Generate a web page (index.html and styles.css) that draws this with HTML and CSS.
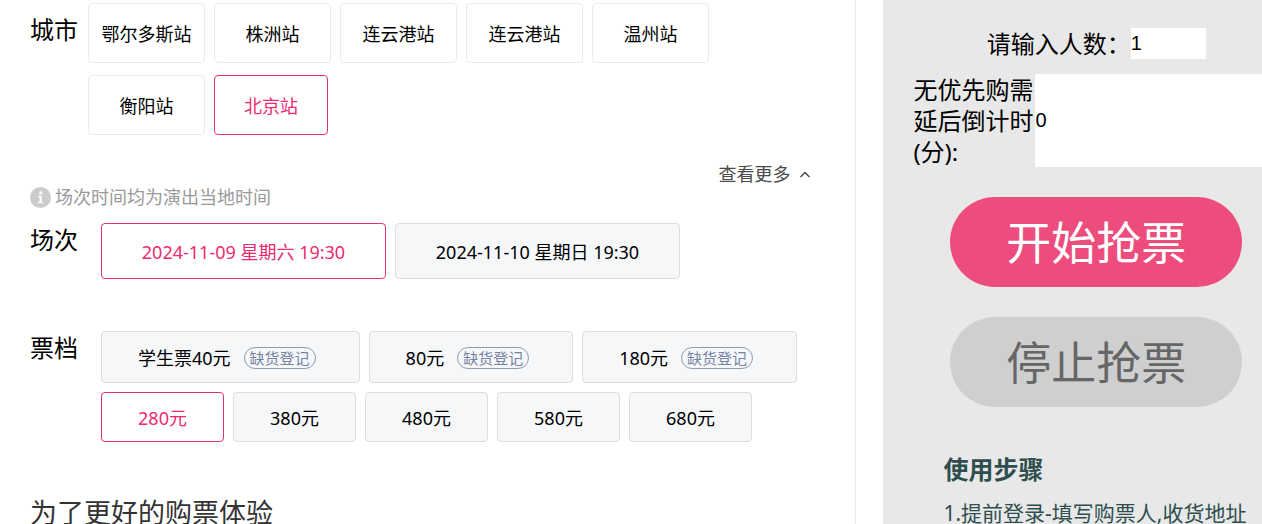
FILE: index.html
```
<!DOCTYPE html>
<html lang="zh-CN">

<head>
  <meta charset="UTF-8" />
  <meta name="viewport" content="width=device-width, initial-scale=1.0" />
  <title>抢票</title>
  <link rel="stylesheet" href="styles.css">
</head>

<body>

  <div class="page">
    <main class="detail">
      <section class="row city">
        <h2 class="label">城市</h2>
        <div class="options">
          <button type="button" class="option">鄂尔多斯站</button>
          <button type="button" class="option">株洲站</button>
          <button type="button" class="option">连云港站</button>
          <button type="button" class="option">连云港站</button>
          <button type="button" class="option">温州站</button>
          <button type="button" class="option">衡阳站</button>
          <button type="button" class="option active">北京站</button>
        </div>
      </section>

      <button type="button" class="more">查看更多
        <svg class="arrow" viewBox="0 0 12 8" aria-hidden="true">
          <path d="M1.500 7 6 2.500l4.500 4.500" />
        </svg>
      </button>

      <p class="notice">
        <svg class="info" viewBox="0 0 21 21" aria-hidden="true">
          <circle cx="10.500" cy="10.500" r="10.500" fill="#ccc" />
          <circle cx="10.800" cy="5.900" r="1.600" fill="#fff" />
          <path d="M8.200 8.800h3.600v6h1.200v1.400H8.200v-1.400h1.300v-4.600H8.200z" fill="#fff" />
        </svg>
        场次时间均为演出当地时间
      </p>

      <section class="row session">
        <h2 class="label">场次</h2>
        <div class="options">
          <button type="button" class="option active">2024-11-09 星期六 19:30</button>
          <button type="button" class="option">2024-11-10 星期日 19:30</button>
        </div>
      </section>

      <section class="row price">
        <h2 class="label">票档</h2>
        <div class="options">
          <button type="button" class="option soldout">学生票40元<span class="tag">缺货登记</span></button>
          <button type="button" class="option soldout">80元<span class="tag">缺货登记</span></button>
          <button type="button" class="option soldout">180元<span class="tag">缺货登记</span></button>
          <button type="button" class="option active">280元</button>
          <button type="button" class="option">380元</button>
          <button type="button" class="option">480元</button>
          <button type="button" class="option">580元</button>
          <button type="button" class="option">680元</button>
        </div>
      </section>

      <p class="tips">为了更好的购票体验</p>
    </main>

    <aside class="panel">
      <div class="panel-inner">
        <div class="field">
          <label for="count">请输入人数：</label>
          <input type="text" class="input count" id="count" value="1">
        </div>
        <div class="field delay-field">
          <label for="delay" class="delay-label">无优先购需延后倒计时(分):</label>
          <input type="text" class="input delay" id="delay" value="0">
        </div>

        <button type="button" class="action start">开始抢票</button>
        <button type="button" class="action stop">停止抢票</button>

        <div class="steps">
          <h3 class="steps-title">使用步骤</h3>
          <p class="step">1.提前登录-填写购票人,收货地址</p>
        </div>
      </div>
    </aside>
  </div>

</body>

</html>
```

FILE: styles.css
```
* {
  box-sizing: border-box;
}

body {
  margin: 0;
  background-color: #fff;
  color: #000;
  font-family: "Noto Sans", "Noto Sans CJK SC", sans-serif;
  font-size: 18px;
}

h2,
h3,
p {
  margin: 0;
  font-weight: normal;
}

button {
  font-family: inherit;
  cursor: pointer;
}

.page {
  display: grid;
  grid-template-columns: minmax(0, 7fr) minmax(0, 3fr);
  height: 100vh;
  overflow: hidden;
}

.detail {
  display: flex;
  flex-direction: column;
  margin-right: 27px;
  padding: 3px 44px 0 30px;
  border-right: 1px solid #ebebeb;
}

.row {
  display: flex;
  align-items: flex-start;
  gap: 23px;
}

.label {
  flex: none;
  font-size: 24px;
  line-height: 34px;
}

.options {
  display: flex;
  flex-wrap: wrap;
  gap: 9px;
}

.option {
  min-width: 123px;
  height: 50px;
  padding: 2px 35px 0;
  border: 1px solid #ddd;
  border-radius: 4px;
  background-color: #f5f7f9;
  color: #000;
  font-size: 18px;
  line-height: 24px;
  white-space: nowrap;
}

.option.active {
  border-color: #e6316f;
  background-color: #fff;
  color: #ee2a70;
}

.city {
  gap: 10px;
}

.city .label {
  padding-top: 10px;
}

.city .options {
  row-gap: 12px;
}

.city .option {
  min-width: 117px;
  height: 60px;
  padding: 2px 12px 0;
  border-color: #ebebeb;
  background-color: #fff;
}

.city .option.active {
  min-width: 114px;
  border-color: #e6316f;
}

.more {
  display: flex;
  align-items: center;
  align-self: flex-end;
  gap: 9px;
  margin-top: 27px;
  padding: 0;
  border: none;
  background: none;
  color: #4a4a4a;
  font-size: 18px;
  line-height: 24px;
}

.arrow {
  width: 12px;
  height: 8px;
  fill: none;
  stroke: #4a4a4a;
  stroke-width: 1.5;
}

.notice {
  display: flex;
  align-items: center;
  gap: 4px;
  color: #999;
  line-height: 22px;
}

.info {
  width: 21px;
  height: 21px;
}

.session {
  margin-top: 15px;
}

.session .option {
  min-width: 285px;
  height: 56px;
}

.price {
  margin-top: 52px;
}

.option.soldout {
  display: flex;
  align-items: center;
  gap: 13px;
  height: 52px;
  padding: 2px 43px 0 36px;
}

.tag {
  padding: 0 5px;
  border: 1px solid #8e9ab5;
  border-radius: 11px;
  color: #7684a3;
  font-size: 15px;
  line-height: 20px;
}

.tips {
  margin-top: 53px;
  color: #333;
  font-size: 27px;
  line-height: 36px;
  white-space: nowrap;
}

.panel {
  padding: 28px 0 0 30px;
  background-color: #e8e8e8;
  overflow: hidden;
}

/* the form is slightly wider than the panel and runs off its right edge */
.panel-inner {
  display: flex;
  flex-direction: column;
  align-items: center;
  margin-right: -17px;
}

.field {
  display: flex;
  font-size: 24px;
  line-height: 31px;
}

.input {
  min-width: 0;
  padding: 0;
  border: none;
  background-color: #fff;
  color: #000;
  font-family: "Liberation Sans", Arial, sans-serif;
  font-size: 20px;
}

.count {
  width: 75px;
}

.delay-field {
  width: 100%;
  margin-top: 15px;
}

.delay-label {
  flex: none;
  width: 122px;
}

.delay {
  flex: 1;
}

.action {
  width: 80%;
  height: 90px;
  margin-top: 30px;
  padding: 0 0 4px;
  border: none;
  border-radius: 45px;
  font-size: 45px;
}

.start {
  background-color: #ec4d7d;
  color: #fff;
}

.stop {
  background-color: #cfcfcf;
  color: #666;
}

.steps {
  width: 100%;
  margin-top: 46px;
  padding-left: 30px;
  color: #2f4f4f;
}

.steps-title {
  font-size: 25px;
  font-weight: bold;
  line-height: 32px;
}

.step {
  margin-top: 13px;
  font-size: 21px;
  line-height: 30px;
  white-space: nowrap;
}
```
